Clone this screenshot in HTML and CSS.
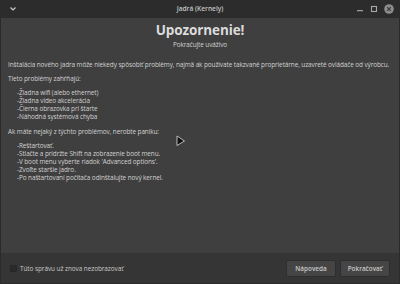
FILE: index.html
```html
<!DOCTYPE html>
<html lang="sk">
<head>
<meta charset="utf-8">
<link rel="stylesheet" href="styles.css">
</head>
<body>
<div class="window">
  <header class="titlebar">
    <svg class="menu-chev" width="8" height="6" viewBox="0 0 8 6"><path d="M1.5 1.5 L4 4 L6.5 1.5" fill="none" stroke="#c8c8c8" stroke-width="1.2"/></svg>
    <div class="title">Jadrá (Kernely)</div>
    <div class="controls">
      <svg width="8" height="8" viewBox="0 0 8 8"><rect x="1" y="5" width="6" height="1.3" fill="#9a9a9a"/></svg>
      <svg width="8" height="8" viewBox="0 0 8 8"><rect x="1.5" y="1.5" width="5" height="5" fill="none" stroke="#a8a8a8" stroke-width="1.1"/></svg>
      <svg width="10" height="10" viewBox="0 0 10 10"><circle cx="5" cy="5" r="4.8" fill="#8c8c8c"/><path d="M3.2 3.2 L6.8 6.8 M6.8 3.2 L3.2 6.8" stroke="#3a3a3a" stroke-width="1.2"/></svg>
    </div>
  </header>
  <main class="content">
    <h1 class="heading">Upozornenie!</h1>
    <p class="sub">Pokračujte uváživo</p>
    <p class="para">Inštalácia nového jadra môže niekedy spôsobiť problémy, najmä ak používate takzvané proprietárne, uzavreté ovládače od výrobcu.</p>
    <p class="para">Tieto problémy zahŕňajú:</p>
    <ul class="list">
      <li>-Žiadna wifi (alebo ethernet)</li>
      <li>-Žiadna video akcelerácia</li>
      <li>-Čierna obrazovka pri štarte</li>
      <li>-Náhodná systémová chyba</li>
    </ul>
    <p class="para">Ak máte nejaký z týchto problémov, nerobte paniku:</p>
    <ul class="list">
      <li>-Reštartovať.</li>
      <li>-Stlačte a pridržte Shift na zobrazenie boot menu.</li>
      <li>-V boot menu vyberte riadok 'Advanced options'.</li>
      <li>-Zvoľte staršie jadro.</li>
      <li>-Po naštartovaní počítača odinštalujte nový kernel.</li>
    </ul>
    <svg class="cursor" width="10" height="12" viewBox="0 0 10 12"><path d="M1 1 L8.5 6 L1 10.5 Z" fill="#111" stroke="#ddd" stroke-width="0.8" stroke-linejoin="round"/></svg>
  </main>
  <footer class="footer">
    <label class="check"><span class="box"></span>Túto správu už znova nezobrazovať</label>
    <div class="buttons">
      <button class="btn">Nápoveda</button>
      <button class="btn">Pokračovať</button>
    </div>
  </footer>
</div>
</body>
</html>
```
FILE: styles.css
```css
* { box-sizing: border-box; }
html, body { margin: 0; padding: 0; }
body {
  width: 400px;
  height: 284px;
  background: #2b2b2b;
  font-family: "Open Sans", "Noto Sans", sans-serif;
  color: #d2d2d2;
  overflow: hidden;
}
.window {
  display: flex;
  flex-direction: column;
  height: 284px;
}
.titlebar {
  height: 18px;
  flex: none;
  display: flex;
  align-items: center;
  padding: 0 6px 0 8px;
  background: #2c2c2c;
  position: relative;
}
.menu-chev { flex: none; margin-left: 1px; }
.title {
  position: absolute;
  left: 0; right: 0;
  text-align: center;
  font-size: 6.6px;
  font-weight: 600;
  color: #c4c4c4;
  line-height: 18px;
}
.controls {
  margin-left: auto;
  display: flex;
  align-items: center;
  gap: 6px;
}
.content {
  flex: 1;
  background: #3f3f3f;
  margin: 0 1px;
  padding: 2px 7px 0 7px;
  position: relative;
  font-size: 6.4px;
  line-height: 8px;
  letter-spacing: -0.08px;
  white-space: nowrap;
}
.heading {
  margin: 0;
  text-align: center;
  font-size: 13.5px;
  font-weight: 700;
  line-height: 20px;
  letter-spacing: -0.1px;
  color: #dcdcdc;
}
.sub {
  margin: 0 0 12px;
  text-align: center;
  font-size: 6.4px;
  line-height: 9px;
}
.para { margin: 0 0 6px; }
.list {
  list-style: none;
  margin: 0 0 7px;
  padding: 0 0 0 9px;
}
.cursor {
  position: absolute;
  left: 175px;
  top: 117px;
}
.footer {
  height: 30px;
  flex: none;
  background: #353535;
  margin: 0 1px 1px;
  display: flex;
  align-items: center;
  padding: 0 9px 0 9px;
}
.check {
  display: flex;
  align-items: center;
  gap: 3px;
  font-size: 6.4px;
  letter-spacing: -0.05px;
  color: #c8c8c8;
}
.box {
  width: 7px; height: 7px;
  background: #2a2a2a;
  border: 1px solid #262626;
  border-radius: 1px;
}
.buttons {
  margin-left: auto;
  display: flex;
  gap: 4px;
}
.btn {
  width: 50px;
  height: 17px;
  background: #454545;
  border: 1px solid #2e2e2e;
  border-radius: 2px;
  color: #c8c8c8;
  font-family: inherit;
  font-size: 6.4px;
  font-weight: 600;
  padding: 0;
}
```
